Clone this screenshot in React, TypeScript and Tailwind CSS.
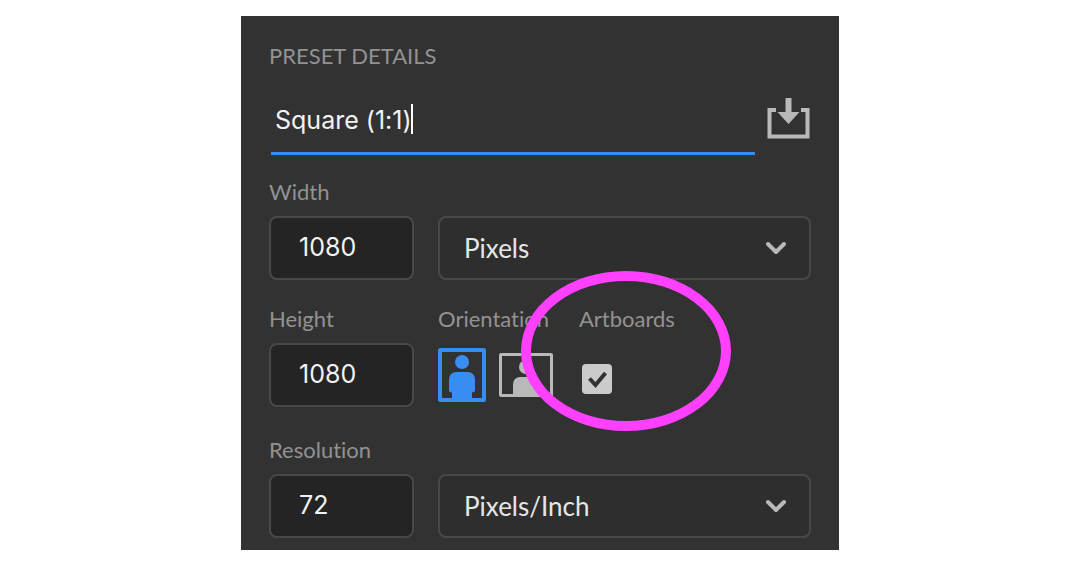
import { useState } from 'react'
import type { ReactNode } from 'react'

const fieldBox = 'h-16 w-full rounded-lg border-2 border-[#484848] outline-none'

function Label({ htmlFor, children }: { htmlFor: string; children: ReactNode }) {
  return (
    <label htmlFor={htmlFor} className="mb-2.5 block text-[22px] leading-7 text-[#929292]">
      {children}
    </label>
  )
}

function NumberField({ id, label, value }: { id: string; label: string; value: string }) {
  return (
    <div className="w-[145px] shrink-0">
      <Label htmlFor={id}>{label}</Label>
      <input
        id={id}
        defaultValue={value}
        inputMode="numeric"
        className={`${fieldBox} block bg-[#242424] pb-0.5 pl-7 font-[Inter,sans-serif] text-[25px] text-[#f2f2f2]`}
      />
    </div>
  )
}

function UnitSelect({ label, options }: { label: string; options: string[] }) {
  return (
    <div className="relative flex-1 self-end">
      <select
        aria-label={label}
        className={`${fieldBox} block appearance-none bg-[#2e2e2e] pl-6 text-[26px] text-[#e6e6e6]`}
      >
        {options.map((option) => (
          <option key={option}>{option}</option>
        ))}
      </select>
      <svg className="pointer-events-none absolute top-6 right-6 h-4 w-[22px]" viewBox="0 0 22 16" fill="none">
        <path d="M3 4l8 8 8-8" stroke="#b9b9b9" strokeWidth="4" strokeLinecap="round" strokeLinejoin="round" />
      </svg>
    </div>
  )
}

export default function App() {
  const [portrait, setPortrait] = useState(true)
  const [artboards, setArtboards] = useState(true)

  return (
    <main className="min-h-screen bg-white pt-4 font-[Lato,sans-serif] [font-variant-ligatures:none]">
      <form className="relative mx-auto max-w-[598px] bg-[#323232] px-7 pt-[26px] pb-3">
        <h2 className="text-[22px] leading-7 text-[#929292]">PRESET DETAILS</h2>

        {/* Preset name */}
        <div className="mt-[22px] flex gap-3 pr-px pl-0.5">
          <div className="relative flex-1">
            <input
              aria-label="Preset name"
              defaultValue="Square (1:1)"
              className="block h-[63px] w-full border-b-[3px] border-[#378ef0] bg-transparent pb-1 pl-1 font-[Inter,sans-serif] text-[25px] text-[#f2f2f2] caret-transparent outline-none"
            />
            <span className="absolute top-3 left-[140px] h-[30px] w-0.5 bg-white" />
          </div>
          <button type="button" aria-label="Save preset" className="mt-1.5 h-[42px] w-[43px]">
            <svg className="h-full w-full" viewBox="0 0 43 42" fill="none">
              <path d="M9 12H2.5V38.5H40.5V12H34" stroke="#b9b9b9" strokeWidth="4" />
              <path d="M18.5 0h6v14H32.500L21.500 26 10.500 14h8z" fill="#b9b9b9" />
            </svg>
          </button>
        </div>

        <div className="mt-[23px] flex gap-6">
          <NumberField id="width" label="Width" value="1080" />
          <UnitSelect label="Width unit" options={['Pixels', 'Inches', 'Centimeters']} />
        </div>

        <div className="mt-[25px] flex gap-6">
          <NumberField id="height" label="Height" value="1080" />
          <div className="flex flex-1">
            <div className="w-[141px]">
              <Label htmlFor="portrait">Orientation</Label>
              <div className="flex h-16 items-center gap-[13px]">
                <button
                  type="button"
                  id="portrait"
                  aria-label="Portrait"
                  aria-pressed={portrait}
                  onClick={() => setPortrait(true)}
                  className={portrait ? 'text-[#378ef0]' : 'text-[#b9b9b9]'}
                >
                  <svg className="h-[54px] w-12" viewBox="0 0 48 54" fill="none">
                    <rect x="2" y="2" width="44" height="50" rx="0.500" stroke="currentColor" strokeWidth="4" />
                    <circle cx="24" cy="14" r="7" fill="currentColor" />
                    <path d="M18 24h12a7 7 0 017 7v11q0 2.500-3 2.500V52H14v-7.500q-3 0-3-2.500V31a7 7 0 017-7z" fill="currentColor" />
                  </svg>
                </button>
                <button
                  type="button"
                  aria-label="Landscape"
                  aria-pressed={!portrait}
                  onClick={() => setPortrait(false)}
                  className={portrait ? 'text-[#b9b9b9]' : 'text-[#378ef0]'}
                >
                  <svg className="h-11 w-[54px]" viewBox="0 0 54 44" fill="none">
                    <rect x="1.500" y="1.500" width="51" height="41" rx="0.500" stroke="currentColor" strokeWidth="3" />
                    <circle cx="27" cy="14" r="7" fill="currentColor" />
                    <path d="M21 24h12a7 7 0 017 7v11H14V31a7 7 0 017-7z" fill="currentColor" />
                  </svg>
                </button>
              </div>
            </div>

            <div>
              <Label htmlFor="artboards">Artboards</Label>
              <div className="flex h-16 items-center pt-2 pl-[3px]">
                <div className="relative h-[30px] w-[30px]">
                  <input
                    id="artboards"
                    type="checkbox"
                    checked={artboards}
                    onChange={(e) => setArtboards(e.target.checked)}
                    className="block h-full w-full appearance-none rounded bg-[#cbcbcb]"
                  />
                  {artboards && (
                    <svg className="pointer-events-none absolute inset-0 h-full w-full" viewBox="0 0 30 30" fill="none">
                      <path d="M7.500 14.500l6 6.500 10-12" stroke="#323232" strokeWidth="4" />
                    </svg>
                  )}
                </div>
              </div>
            </div>
          </div>
        </div>

        <div className="mt-[29px] flex gap-6">
          <NumberField id="resolution" label="Resolution" value="72" />
          <UnitSelect label="Resolution unit" options={['Pixels/Inch', 'Pixels/Centimeter']} />
        </div>

        {/* Highlight ring around the artboards option */}
        <div className="pointer-events-none absolute top-[255px] left-[280px] h-40 w-[210px] rounded-[50%] border-[10px] border-[#ff40ff]" />
      </form>
    </main>
  )
}
